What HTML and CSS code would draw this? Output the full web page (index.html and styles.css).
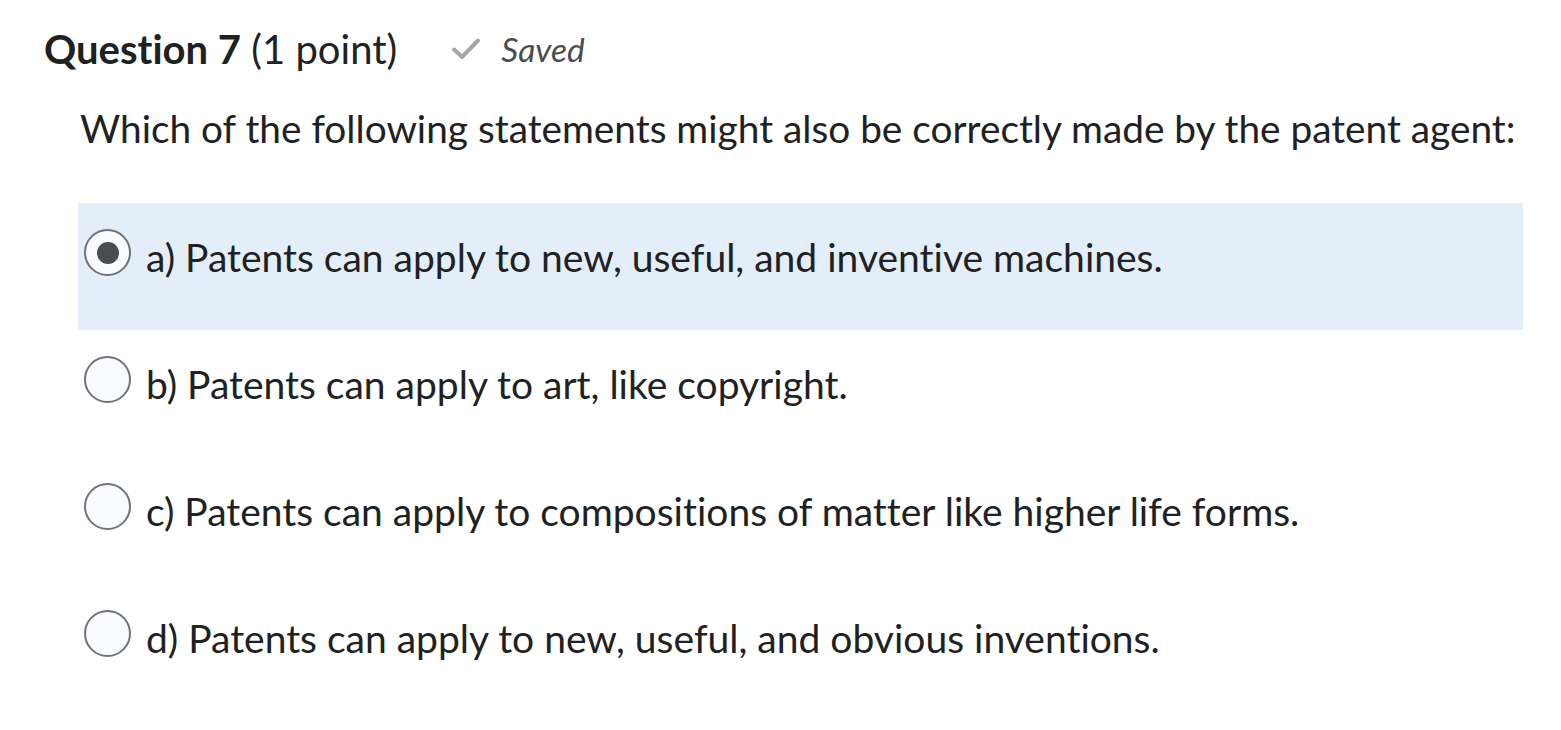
FILE: index.html
```html
<!DOCTYPE html>
<html>
<head>
<meta charset="utf-8">
<link rel="stylesheet" href="styles.css">
</head>
<body>
<div class="page">
  <div class="header">
    <h2 class="title"><strong>Question 7</strong> <span class="pts">(1 point)</span></h2>
    <div class="saved">
      <svg class="check" width="30" height="24" viewBox="0 0 30 24"><path d="M3 12.5 L11 20 L27 3.5" fill="none" stroke="#a3a8ad" stroke-width="4" stroke-linecap="round" stroke-linejoin="round"/></svg>
      <span>Saved</span>
    </div>
  </div>
  <p class="question">Which of the following statements might also be correctly made by the patent agent:</p>
  <div class="options">
    <label class="option selected"><span class="radio checked"></span><span class="text">a) Patents can apply to new, useful, and inventive machines.</span></label>
    <label class="option"><span class="radio"></span><span class="text">b) Patents can apply to art, like copyright.</span></label>
    <label class="option"><span class="radio"></span><span class="text">c) Patents can apply to compositions of matter like higher life forms.</span></label>
    <label class="option"><span class="radio"></span><span class="text">d) Patents can apply to new, useful, and obvious inventions.</span></label>
  </div>
</div>
</body>
</html>
```
FILE: styles.css
```css
html, body { margin: 0; padding: 0; background: #fff; }
body { font-family: Lato, "Noto Sans", sans-serif; color: #202122; font-variant-ligatures: none; }
.page { padding: 22px 38px 0 44px; }
.header { display: flex; align-items: center; height: 54px; }
.title { margin: 0; font-size: 40px; font-weight: 400; }
.title strong { font-weight: 700; }
.saved { display: flex; align-items: center; margin-left: 54px; color: #494c4e; font-style: italic; font-size: 33.5px; }
.check { margin-right: 20px; }
.question { margin: 26px 0 0 36px; font-size: 38.8px; line-height: 52px; }
.options { margin: 49px 0 0 34px; display: flex; flex-direction: column; }
.option { box-sizing: border-box; display: flex; align-items: flex-start; height: 127px; padding-top: 26px; font-size: 39px; line-height: 48px; }
.option.selected { background: #e3eef9; }
.radio { box-sizing: border-box; width: 47px; height: 47px; border-radius: 50%; border: 2px solid #6e7376; background: #f9fbff; margin-left: 6px; margin-right: 15px; display: flex; align-items: center; justify-content: center; flex: none; }
.radio.checked::after { content: ""; width: 22px; height: 22px; border-radius: 50%; background: #494c4e; }
.text { margin-top: 4px; }
```
